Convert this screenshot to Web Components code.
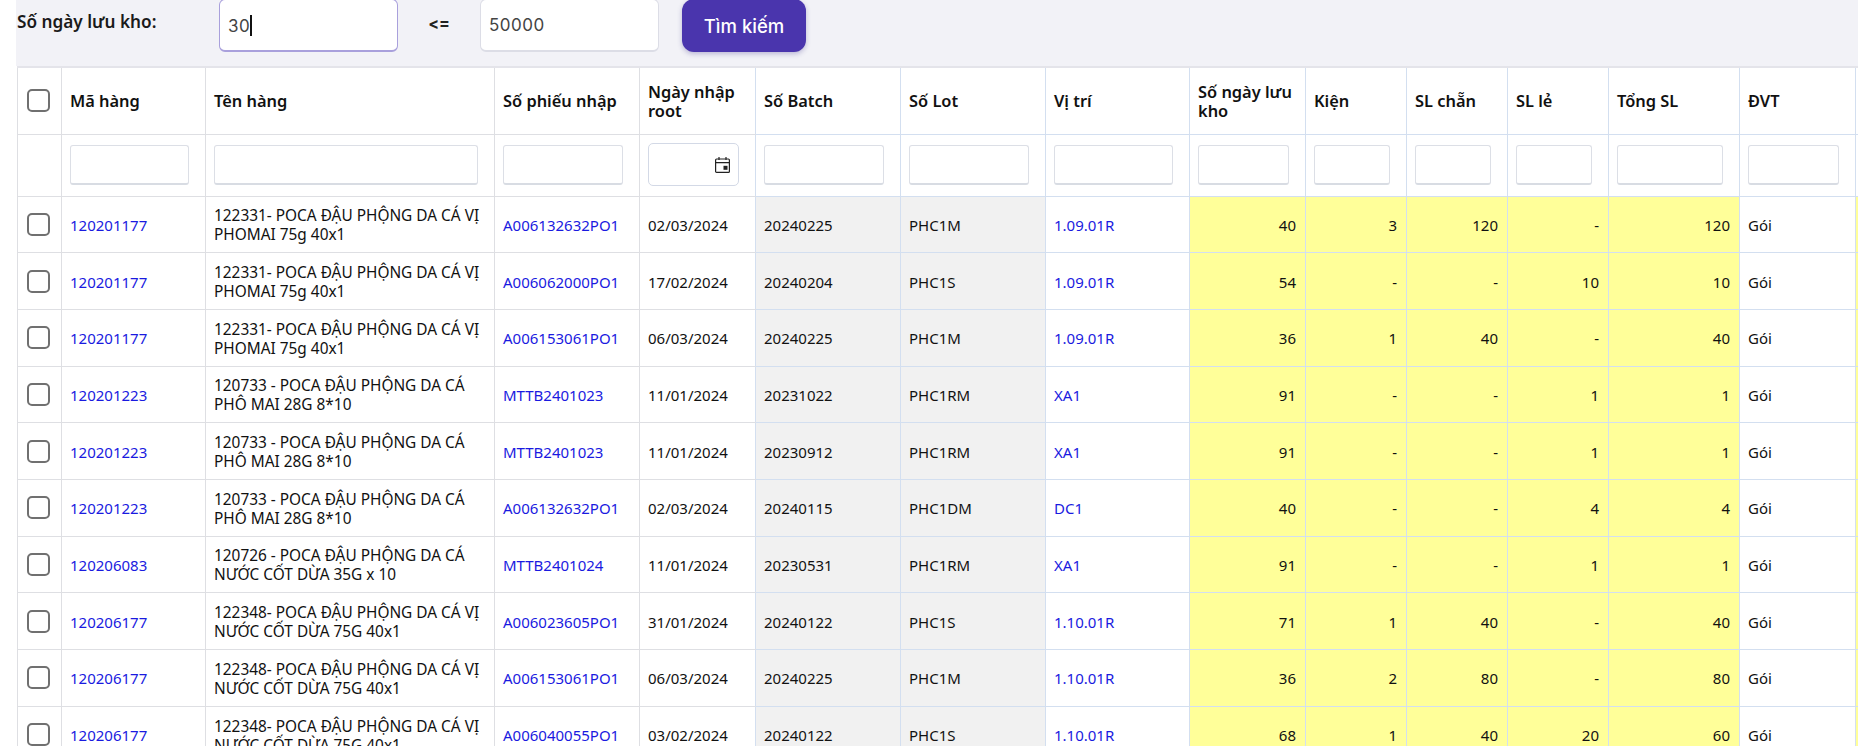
<!DOCTYPE html>
<html lang="vi">
<head>
<meta charset="utf-8">
<title>Tồn kho</title>
<style>
  html, body { margin: 0; padding: 0; background: #fff; overflow: hidden; height: 746px; }
  body { font-family: "Noto Sans", sans-serif; }
  stock-page { width: 1866px; height: 746px; }
</style>
</head>
<body>
<stock-page></stock-page>

<script>
const TEXT_FONT = '"Noto Sans", "DejaVu Sans", sans-serif';

class PlainInput extends HTMLElement {
  constructor() {
    super();
    this.attachShadow({ mode: 'open' });
  }

  connectedCallback() {
    const isDate = this.hasAttribute('date');
    this.shadowRoot.innerHTML = `
      <style>
        :host { display: block; box-sizing: border-box; height: 40px; background: #fff;
          border: 1px solid #dcdfe6; border-bottom: 2px solid #d8dce3; border-radius: 3px; position: relative; }
        :host([date]) { height: 43px; border: 1px solid #d3d9e6; border-radius: 5px; margin-top: -1px; }
        svg { position: absolute; right: 7px; top: 12px; }
      </style>
      ${isDate ? `<svg width="17" height="18" viewBox="0 0 17 18" fill="none" stroke="#222" stroke-width="1.2">
        <rect x="1.6" y="3" width="13.8" height="13.4" rx="1"/>
        <path d="M1.6 6.6h13.8M5 1v3M12 1v3"/>
        <rect x="9.5" y="9.8" width="4" height="4" fill="#222" stroke="none"/>
      </svg>` : ''}
    `;
  }
}
customElements.define('plain-input', PlainInput);

class RowCheck extends HTMLElement {
  constructor() {
    super();
    this.attachShadow({ mode: 'open' });
    this.shadowRoot.innerHTML = `
      <style>
        :host { display: block; box-sizing: border-box; width: 23px; height: 23px; margin: 0 0 0 9px;
          border: 2px solid #707070; border-radius: 5px; background: #fff; }
      </style>
    `;
  }
}
customElements.define('row-check', RowCheck);

class SearchBar extends HTMLElement {
  constructor() {
    super();
    this.attachShadow({ mode: 'open' });
    this.shadowRoot.innerHTML = `
      <style>
        :host { display: flex; box-sizing: border-box; height: 66px; margin-left: 16px; width: 1842px; background: #f2f2f7;
          align-items: flex-start; }
        .label { font: 600 17.2px ${TEXT_FONT}; color: #1a1a1a; width: 202px; padding-left: 1px; margin-top: 10px; white-space: nowrap; }
        .box { box-sizing: border-box; width: 179px; height: 53px; margin-top: -1px; background: #fff; border: 1px solid #dcdde6;
          border-bottom-width: 2px; border-radius: 6px; font: 17px Inter, sans-serif; color: #444; padding: 15px 8px 0 8px; letter-spacing: .5px; }
        .box.focus { border-color: #a9a0dc; }
        .caret { display: inline-block; width: 1.5px; height: 21px; background: #111; vertical-align: -4px; }
        .op { width: 82px; text-align: center; font: 700 16px Inter, sans-serif; color: #222; margin-top: 13px; }
        button { margin: -1px 0 0 23px; width: 124px; height: 53px; border: 0; border-radius: 12px; background: #4a35ad;
          color: #fff; font: 500 18.5px Inter, sans-serif; box-shadow: 0 2px 5px rgba(60,50,140,.3); padding: 0; }
      </style>
      <div class="label">Số ngày lưu kho:</div>
      <div class="box focus">30<span class="caret"></span></div>
      <div class="op">&lt;=</div>
      <div class="box">50000</div>
      <button>Tìm kiếm</button>
    `;
  }
}
customElements.define('search-bar', SearchBar);

const COLUMNS = [
  { title: '', w: 44 },
  { title: 'Mã hàng', w: 144 },
  { title: 'Tên hàng', w: 289 },
  { title: 'Số phiếu nhập', w: 145 },
  { title: 'Ngày nhập root', w: 116 },
  { title: 'Số Batch', w: 145 },
  { title: 'Số Lot', w: 145 },
  { title: 'Vị trí', w: 144 },
  { title: 'Số ngày lưu kho', w: 116 },
  { title: 'Kiện', w: 101 },
  { title: 'SL chẵn', w: 101 },
  { title: 'SL lẻ', w: 101 },
  { title: 'Tổng SL', w: 131 },
  { title: 'ĐVT', w: 116 },
  { title: '', w: 60 },
];

const NAME_A = '122331- POCA ĐẬU PHỘNG DA CÁ VỊ PHOMAI 75g 40x1';
const NAME_B = '120733 - POCA ĐẬU PHỘNG DA CÁ PHÔ MAI 28G 8*10';
const NAME_C = '120726 - POCA ĐẬU PHỘNG DA CÁ NƯỚC CỐT DỪA 35G x 10';
const NAME_D = '122348- POCA ĐẬU PHỘNG DA CÁ VỊ NƯỚC CỐT DỪA 75G 40x1';

const ROWS = [
  ['120201177', NAME_A, 'A006132632PO1', '02/03/2024', '20240225', 'PHC1M', '1.09.01R', '40', '3', '120', '-', '120'],
  ['120201177', NAME_A, 'A006062000PO1', '17/02/2024', '20240204', 'PHC1S', '1.09.01R', '54', '-', '-', '10', '10'],
  ['120201177', NAME_A, 'A006153061PO1', '06/03/2024', '20240225', 'PHC1M', '1.09.01R', '36', '1', '40', '-', '40'],
  ['120201223', NAME_B, 'MTTB2401023', '11/01/2024', '20231022', 'PHC1RM', 'XA1', '91', '-', '-', '1', '1'],
  ['120201223', NAME_B, 'MTTB2401023', '11/01/2024', '20230912', 'PHC1RM', 'XA1', '91', '-', '-', '1', '1'],
  ['120201223', NAME_B, 'A006132632PO1', '02/03/2024', '20240115', 'PHC1DM', 'DC1', '40', '-', '-', '4', '4'],
  ['120206083', NAME_C, 'MTTB2401024', '11/01/2024', '20230531', 'PHC1RM', 'XA1', '91', '-', '-', '1', '1'],
  ['120206177', NAME_D, 'A006023605PO1', '31/01/2024', '20240122', 'PHC1S', '1.10.01R', '71', '1', '40', '-', '40'],
  ['120206177', NAME_D, 'A006153061PO1', '06/03/2024', '20240225', 'PHC1M', '1.10.01R', '36', '2', '80', '-', '80'],
  ['120206177', NAME_D, 'A006040055PO1', '03/02/2024', '20240122', 'PHC1S', '1.10.01R', '68', '1', '40', '20', '60'],
];

class StockTable extends HTMLElement {
  constructor() {
    super();
    this.attachShadow({ mode: 'open' });
  }

  connectedCallback() {
    const cols = COLUMNS.map(c => `<col style="width:${c.w}px">`).join('');
    const head = COLUMNS.map((c, i) => `<th class="${this.lineClass(i)}">${i === 0 ? '<row-check></row-check>' : c.title}</th>`).join('');
    const filters = COLUMNS.map((c, i) => {
      if (i === 0 || i === 14) return `<td class="${this.lineClass(i)}"></td>`;
      return `<td class="${this.lineClass(i)}"><plain-input ${i === 4 ? 'date' : ''}></plain-input></td>`;
    }).join('');
    const rows = ROWS.map(r => this.renderRow(r)).join('');

    this.shadowRoot.innerHTML = `
      <style>
        :host { display: block; margin-left: 16px; width: 1842px; height: 680px; overflow: hidden; color: #111;
          font: 15.4px/19px ${TEXT_FONT}; }
        table { border-collapse: collapse; table-layout: fixed; width: 1899px; margin-left: 1px; background: #fff; }
        th, td { box-sizing: border-box; border: 1px solid #dedfe3; padding: 0 8px; text-align: left; vertical-align: middle; overflow: hidden; }
        th.blue, td.blue { border-color: #d3dff0; }
        th.date-edge, td.date-edge { border-right-color: #d3dff0; }
        th { height: 67px; font-weight: 600; font-size: 16.4px; line-height: 19px; border-top: 2px solid #e4e4ea; }
        th.blue { border-top-color: #e4e4ea; }
        .filters td { height: 62px; padding-right: 16px; }
        tbody td { height: 56.7px; padding-top: 2px; }
        tbody td.check { padding-top: 0; }
        a { color: #1a1ae0; text-decoration: none; }
        .tight { font-size: 15px; }
        .grey { background: #f1f1f1; }
        .num { background: #ffff99; text-align: right; padding-right: 9px; font-size: 15px; }
        .check { padding: 0; }
      </style>
      <table>
        <colgroup>${cols}</colgroup>
        <thead>
          <tr>${head}</tr>
          <tr class="filters">${filters}</tr>
        </thead>
        <tbody>${rows}</tbody>
      </table>
    `;
  }

  // vertical rules turn blue from the Số Batch column onward
  lineClass(i) {
    if (i === 0) return 'check';
    if (i === 4) return 'date-edge';
    return i >= 5 ? 'blue' : '';
  }

  renderRow(r) {
    return `<tr>
      <td class="check"><row-check></row-check></td>
      <td class="tight"><a>${r[0]}</a></td>
      <td>${r[1]}</td>
      <td class="tight"><a>${r[2]}</a></td>
      <td class="date-edge tight">${r[3]}</td>
      <td class="grey blue tight">${r[4]}</td>
      <td class="grey blue tight">${r[5]}</td>
      <td class="blue tight"><a>${r[6]}</a></td>
      <td class="num blue">${r[7]}</td>
      <td class="num blue">${r[8]}</td>
      <td class="num blue">${r[9]}</td>
      <td class="num blue">${r[10]}</td>
      <td class="num blue">${r[11]}</td>
      <td class="blue tight">Gói</td>
      <td class="num blue"></td>
    </tr>`;
  }
}
customElements.define('stock-table', StockTable);

class StockPage extends HTMLElement {
  constructor() {
    super();
    this.attachShadow({ mode: 'open' });
    this.shadowRoot.innerHTML = `
      <style>:host { display: block; overflow: hidden; }</style>
      <search-bar></search-bar>
      <stock-table></stock-table>
    `;
  }
}
customElements.define('stock-page', StockPage);
</script>
</body>
</html>
